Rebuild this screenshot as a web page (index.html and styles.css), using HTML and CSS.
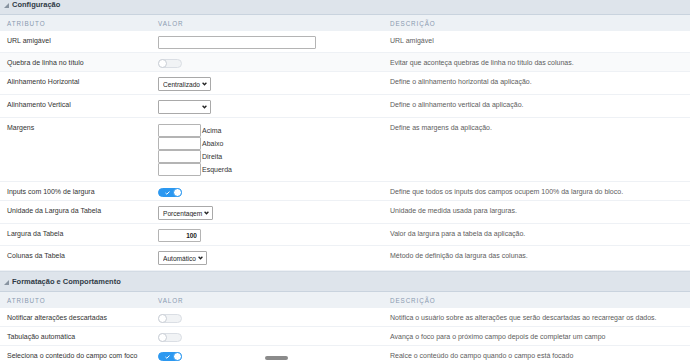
FILE: index.html
```html
<!DOCTYPE html>
<html lang="pt">

<head>
  <meta charset="UTF-8">
  <title>Configuração</title>
  <link rel="stylesheet" href="styles.css">
</head>

<body>
  <div class="page">
    <div class="block">
      <div class="block-title">
        <svg class="fold" width="5" height="5" viewBox="0 0 5 5"><polygon points="5,0 5,5 0,5" /></svg>
        Configuração
      </div>
      <div class="row head">
        <span>Atributo</span><span>Valor</span><span>Descrição</span>
      </div>

      <div class="row">
        <div class="attr">URL amigável</div>
        <div class="val"><input class="text url" type="text"></div>
        <div class="desc">URL amigável</div>
      </div>

      <div class="row shade">
        <div class="attr">Quebra de linha no título</div>
        <div class="val"><span class="switch"><span class="knob"></span></span></div>
        <div class="desc">Evitar que aconteça quebras de linha no título das colunas.</div>
      </div>

      <div class="row">
        <div class="attr">Alinhamento Horizontal</div>
        <div class="val">
          <span class="pick w53">
            <select><option>Centralizado</option></select>
            <svg class="chev" width="5" height="4" viewBox="0 0 5 4"><polyline points="0.6,0.8 2.5,2.8 4.4,0.8" /></svg>
          </span>
        </div>
        <div class="desc">Define o alinhamento horizontal da aplicação.</div>
      </div>

      <div class="row">
        <div class="attr">Alinhamento Vertical</div>
        <div class="val">
          <span class="pick w53">
            <select><option></option></select>
            <svg class="chev" width="5" height="4" viewBox="0 0 5 4"><polyline points="0.6,0.8 2.5,2.8 4.4,0.8" /></svg>
          </span>
        </div>
        <div class="desc">Define o alinhamento vertical da aplicação.</div>
      </div>

      <div class="row tall">
        <div class="attr">Margens</div>
        <div class="val margins">
          <label class="margin"><input class="text small" type="text">Acima</label>
          <label class="margin"><input class="text small" type="text">Abaixo</label>
          <label class="margin"><input class="text small" type="text">Direita</label>
          <label class="margin"><input class="text small" type="text">Esquerda</label>
        </div>
        <div class="desc">Define as margens da aplicação.</div>
      </div>

      <div class="row">
        <div class="attr">Inputs com 100% de largura</div>
        <div class="val">
          <span class="switch on">
            <svg class="tick" width="5" height="4" viewBox="0 0 5 4"><polyline points="0.5,2 1.8,3.2 4.5,0.6" /></svg>
            <span class="knob"></span>
          </span>
        </div>
        <div class="desc">Define que todos os inputs dos campos ocupem 100% da largura do bloco.</div>
      </div>

      <div class="row">
        <div class="attr">Unidade da Largura da Tabela</div>
        <div class="val">
          <span class="pick w55">
            <select><option>Porcentagem</option></select>
            <svg class="chev" width="5" height="4" viewBox="0 0 5 4"><polyline points="0.6,0.8 2.5,2.8 4.4,0.8" /></svg>
          </span>
        </div>
        <div class="desc">Unidade de medida usada para larguras.</div>
      </div>

      <div class="row">
        <div class="attr">Largura da Tabela</div>
        <div class="val"><input class="text small num" type="text" value="100"></div>
        <div class="desc">Valor da largura para a tabela da aplicação.</div>
      </div>

      <div class="row last">
        <div class="attr">Colunas da Tabela</div>
        <div class="val">
          <span class="pick w49">
            <select><option>Automático</option></select>
            <svg class="chev" width="5" height="4" viewBox="0 0 5 4"><polyline points="0.6,0.8 2.5,2.8 4.4,0.8" /></svg>
          </span>
        </div>
        <div class="desc">Método de definição da largura das colunas.</div>
      </div>
    </div>

    <div class="block">
      <div class="block-title">
        <svg class="fold" width="5" height="5" viewBox="0 0 5 5"><polygon points="5,0 5,5 0,5" /></svg>
        Formatação e Comportamento
      </div>
      <div class="row head">
        <span>Atributo</span><span>Valor</span><span>Descrição</span>
      </div>

      <div class="row">
        <div class="attr">Notificar alterações descartadas</div>
        <div class="val"><span class="switch"><span class="knob"></span></span></div>
        <div class="desc">Notifica o usuário sobre as alterações que serão descartadas ao recarregar os dados.</div>
      </div>

      <div class="row">
        <div class="attr">Tabulação automática</div>
        <div class="val"><span class="switch"><span class="knob"></span></span></div>
        <div class="desc">Avança o foco para o próximo campo depois de completar um campo</div>
      </div>

      <div class="row">
        <div class="attr">Seleciona o conteúdo do campo com foco</div>
        <div class="val">
          <span class="switch on">
            <svg class="tick" width="5" height="4" viewBox="0 0 5 4"><polyline points="0.5,2 1.8,3.2 4.5,0.6" /></svg>
            <span class="knob"></span>
          </span>
        </div>
        <div class="desc">Realce o conteúdo do campo quando o campo está focado</div>
      </div>
    </div>
  </div>

  <div class="scroll-thumb"></div>
</body>

</html>
```

FILE: styles.css
```css
body {
  margin: 0;
  overflow: hidden;
  background: #fff;
  color: #333;
  font-family: "Liberation Sans", Arial, sans-serif;
  font-size: 7px;
}

.page {
  margin-top: -6px;
}

.block-title {
  display: flex;
  align-items: center;
  gap: 3px;
  height: 19px;
  padding-left: 4px;
  background: #dee4eb;
  border-top: 1px solid #d3dbe4;
  border-bottom: 1px solid #c9d3de;
  color: #2f3a46;
  font-size: 7.5px;
  font-weight: bold;
}

.block-title .fold {
  fill: #8893a0;
  margin-top: 1px;
}

.row {
  display: grid;
  grid-template-columns: 151px 232px 1fr;
  padding: 5px 0 3px 7px;
  border-bottom: 1px solid #eef1f5;
}

.row.shade {
  background: #f9fafb;
}

.row.tall {
  padding-bottom: 5px;
}

.row.last {
  padding-bottom: 5px;
}

.row.head {
  height: 16px;
  padding: 0 0 0 7px;
  align-items: center;
  border-bottom: 0;
  background: #edf1f5;
  color: #8a9ab0;
  font-size: 6.3px;
  letter-spacing: 0.9px;
  text-transform: uppercase;
}

.attr,
.desc {
  line-height: 10px;
}

.desc {
  color: #5c5c5c;
}

.val {
  display: flex;
  align-items: flex-start;
}

/* inputs */
.text {
  box-sizing: border-box;
  height: 13px;
  margin: 0;
  padding: 0 3px;
  border: 1px solid #b4b4b4;
  border-radius: 1px;
  background: #fff;
  font: inherit;
  color: #222;
  outline: none;
}

.text.url {
  width: 158px;
}

.text.small {
  width: 43px;
}

.text.num {
  text-align: right;
  font-weight: bold;
  font-size: 6.5px;
}

.margins {
  flex-direction: column;
  padding-top: 1px;
}

.margin {
  display: flex;
  align-items: center;
  gap: 1px;
  color: #333;
}

/* selects */
.pick {
  position: relative;
  display: inline-block;
}

.pick select {
  box-sizing: border-box;
  height: 14px;
  width: 100%;
  margin: 0;
  padding: 0 9px 0 4px;
  border: 1px solid #a9a9a9;
  border-radius: 1px;
  background: #fff;
  color: #1e1e1e;
  font: inherit;
  font-size: 6.6px;
  -webkit-appearance: none;
  appearance: none;
}

.pick .chev {
  position: absolute;
  right: 4px;
  top: 5px;
  fill: none;
  stroke: #222;
  stroke-width: 1.3;
}

.w49 { width: 49px; }
.w53 { width: 53px; }
.w55 { width: 55px; }

/* switches */
.switch {
  position: relative;
  box-sizing: border-box;
  display: inline-block;
  width: 24px;
  height: 9px;
  margin: 1px 0 0;
  border: 1px solid #dadee4;
  border-radius: 5px;
  background: #f1f3f5;
}

.switch .knob {
  position: absolute;
  left: -1px;
  top: -1px;
  box-sizing: border-box;
  width: 9px;
  height: 9px;
  border: 1px solid #c9ced5;
  border-radius: 50%;
  background: #fff;
}

.switch.on {
  border-color: #2c98f0;
  background: #2c98f0;
}

.switch.on .knob {
  left: auto;
  right: -1px;
  border-color: #2c98f0;
}

.switch .tick {
  position: absolute;
  left: 6px;
  top: 2px;
  fill: none;
  stroke: #fff;
  stroke-width: 1;
}

.scroll-thumb {
  position: fixed;
  left: 265px;
  top: 356px;
  width: 23px;
  height: 4px;
  border-radius: 2px;
  background: #8b8b8b;
}
```
